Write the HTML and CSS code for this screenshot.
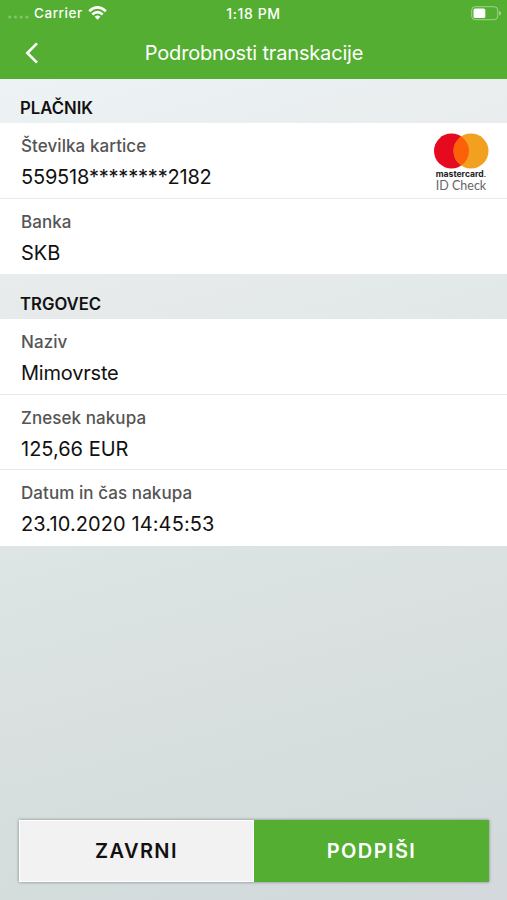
FILE: index.html
```html
<!DOCTYPE html>
<html lang="sl">
<head>
    <meta charset="UTF-8">
    <meta name="viewport" content="width=device-width, initial-scale=1.0">
    <title>Podrobnosti transkacije</title>
    <link rel="stylesheet" href="styles.css">
</head>
<body>
    <div class="page">
        <header class="header">
            <!-- Status Bar -->
            <div class="status-bar">
                <div class="carrier">
                    <svg class="signal" width="22" height="4" viewBox="0 0 22 4" fill="#fff" fill-opacity="0.3">
                        <circle cx="1.8" cy="2" r="1.5"/>
                        <circle cx="7.5" cy="2" r="1.5"/>
                        <circle cx="13.2" cy="2" r="1.5"/>
                        <circle cx="18.9" cy="2" r="1.5"/>
                    </svg>
                    <span class="carrier-name">Carrier</span>
                    <svg class="wifi" width="19" height="14" viewBox="0 0 19 14" fill="none" stroke="#fff" stroke-width="2.6">
                        <path d="M1.2 5.2Q9.5 -2.4 17.8 5.2"/>
                        <path d="M4.3 8.5Q9.5 3.8 14.7 8.5"/>
                        <path d="M9.5 13.8L6.6 10.8Q9.5 8.3 12.4 10.8Z" fill="#fff" stroke="none"/>
                    </svg>
                </div>
                <div class="time">1:18 PM</div>
                <svg class="battery" width="31" height="15" viewBox="0 0 31 15">
                    <rect x="0.7" y="0.7" width="26" height="13" rx="3.5" fill="none" stroke="#fff" stroke-opacity="0.45" stroke-width="1"/>
                    <rect x="2.5" y="2.4" width="11.8" height="9.6" rx="1.6" fill="#fff"/>
                    <path d="M28 5v4.6q2-.6 2-2.3T28 5z" fill="#fff" fill-opacity="0.45"/>
                </svg>
            </div>

            <!-- Navigation Bar -->
            <div class="navigation">
                <svg class="back" width="14" height="22" viewBox="0 0 14 22" fill="none" stroke="#fff" stroke-width="2.6">
                    <path d="M12 1.3L2.3 11L12 20.7"/>
                </svg>
                <h1 class="title">Podrobnosti transkacije</h1>
            </div>
        </header>

        <h2 class="section-title">PLAČNIK</h2>
        <div class="list">
            <div class="row">
                <div class="details">
                    <div class="label">Številka kartice</div>
                    <div class="value card-number">559518********2182</div>
                </div>
                <div class="id-check">
                    <svg width="56" height="36" viewBox="0 0 56 36">
                        <circle cx="18.5" cy="18" r="17.5" fill="#e60a20"/>
                        <circle cx="38" cy="18" r="17.5" fill="#f2a01f"/>
                        <path d="M28.25 3.5a17.5 17.5 0 0 1 0 29a17.5 17.5 0 0 1 0-29z" fill="#fc6008"/>
                    </svg>
                    <div class="brand">mastercard<span class="dot">.</span></div>
                    <div class="check">ID Check</div>
                </div>
            </div>
            <div class="row">
                <div class="details">
                    <div class="label">Banka</div>
                    <div class="value">SKB</div>
                </div>
            </div>
        </div>

        <h2 class="section-title merchant">TRGOVEC</h2>
        <div class="list">
            <div class="row">
                <div class="details">
                    <div class="label">Naziv</div>
                    <div class="value name">Mimovrste</div>
                </div>
            </div>
            <div class="row">
                <div class="details">
                    <div class="label">Znesek nakupa</div>
                    <div class="value">125,66 EUR</div>
                </div>
            </div>
            <div class="row">
                <div class="details">
                    <div class="label">Datum in čas nakupa</div>
                    <div class="value date">23.10.2020 14:45:53</div>
                </div>
            </div>
        </div>

        <div class="actions">
            <button class="reject">ZAVRNI</button>
            <button class="sign">PODPIŠI</button>
        </div>
    </div>
</body>
</html>
```
FILE: styles.css
```css
/* General Styles */
* {
    box-sizing: border-box;
}
body {
    margin: 0;
    font-family: Inter, "Liberation Sans", sans-serif;
    color: #111;
}
.page {
    display: flex;
    flex-direction: column;
    height: 100vh;
    background: linear-gradient(165deg, #eef3f5 5%, #e6eaeb 32%, #dce4e3 58%, #d9dfdf 72%, #d5dedd 82%, #d3d9dc 100%);
}

/* Header */
.header {
    height: 79px;
    flex: none;
    background: #53ae31;
    color: #fff;
}
.status-bar {
    display: grid;
    grid-template-columns: 1fr auto 1fr;
    align-items: center;
    height: 26px;
    padding: 0 5px 0 8px;
    font-size: 13.5px;
    font-weight: 500;
}
.carrier {
    display: flex;
    align-items: center;
}
.signal {
    margin-top: 8px;
}
.carrier-name {
    margin: 0 5px 0 4px;
    letter-spacing: 0.55px;
}
.time {
    margin-right: 3px;
    font-size: 14px;
    letter-spacing: 0.6px;
}
.battery {
    justify-self: end;
}
.navigation {
    display: flex;
    align-items: center;
    height: 53px;
    padding: 0 38px 0 25px;
}
.title {
    flex: 1;
    margin: 0;
    text-align: center;
    font-size: 20px;
    font-weight: 400;
    letter-spacing: -0.17px;
}

/* Transaction details */
.section-title {
    display: flex;
    align-items: flex-end;
    flex: none;
    height: 44px;
    margin: 0;
    padding: 0 20px 5px;
    font-size: 16.7px;
    line-height: 20px;
    font-weight: 600;
}
.section-title.merchant {
    height: 45px;
}
.list {
    flex: none;
    background: #fff;
}
.row {
    display: flex;
    justify-content: space-between;
    height: 75.5px;
    padding: 11px 18px 0 21px;
    border-bottom: 1px solid #e9ebec;
}
.row:last-child {
    border-bottom: none;
}
.label {
    color: #555;
    font-size: 17px;
    line-height: 24px;
    font-weight: 500;
    letter-spacing: 0.07px;
}
.value {
    margin-top: 5px;
    font-size: 20px;
    line-height: 28px;
}
.card-number,
.name {
    letter-spacing: -0.2px;
}
.date {
    letter-spacing: 0.1px;
}

/* Mastercard logo */
.id-check {
    display: flex;
    flex-direction: column;
    align-items: center;
    width: 56px;
    margin-top: -1px;
}
.brand {
    font-size: 8.6px;
    line-height: 10px;
    font-weight: 700;
    color: #222;
    white-space: nowrap;
}
.dot {
    font-weight: 400;
}
.check {
    font-family: Lato, sans-serif;
    font-size: 12.5px;
    line-height: 13px;
    color: #666;
    white-space: nowrap;
}

/* Buttons */
.actions {
    display: flex;
    height: 62px;
    margin: auto 18px 18px 19px;
    box-shadow: 0 0 3px rgba(60, 65, 70, 0.6);
}
.actions button {
    width: 50%;
    padding: 0;
    border: none;
    font-family: inherit;
    font-size: 20px;
    font-weight: 600;
    letter-spacing: 1.4px;
}
.actions .reject {
    background: #f2f2f2;
    color: #111;
    border: 1px solid #fff;
}
.actions .sign {
    background: #53ae31;
    color: #fff;
}
```
